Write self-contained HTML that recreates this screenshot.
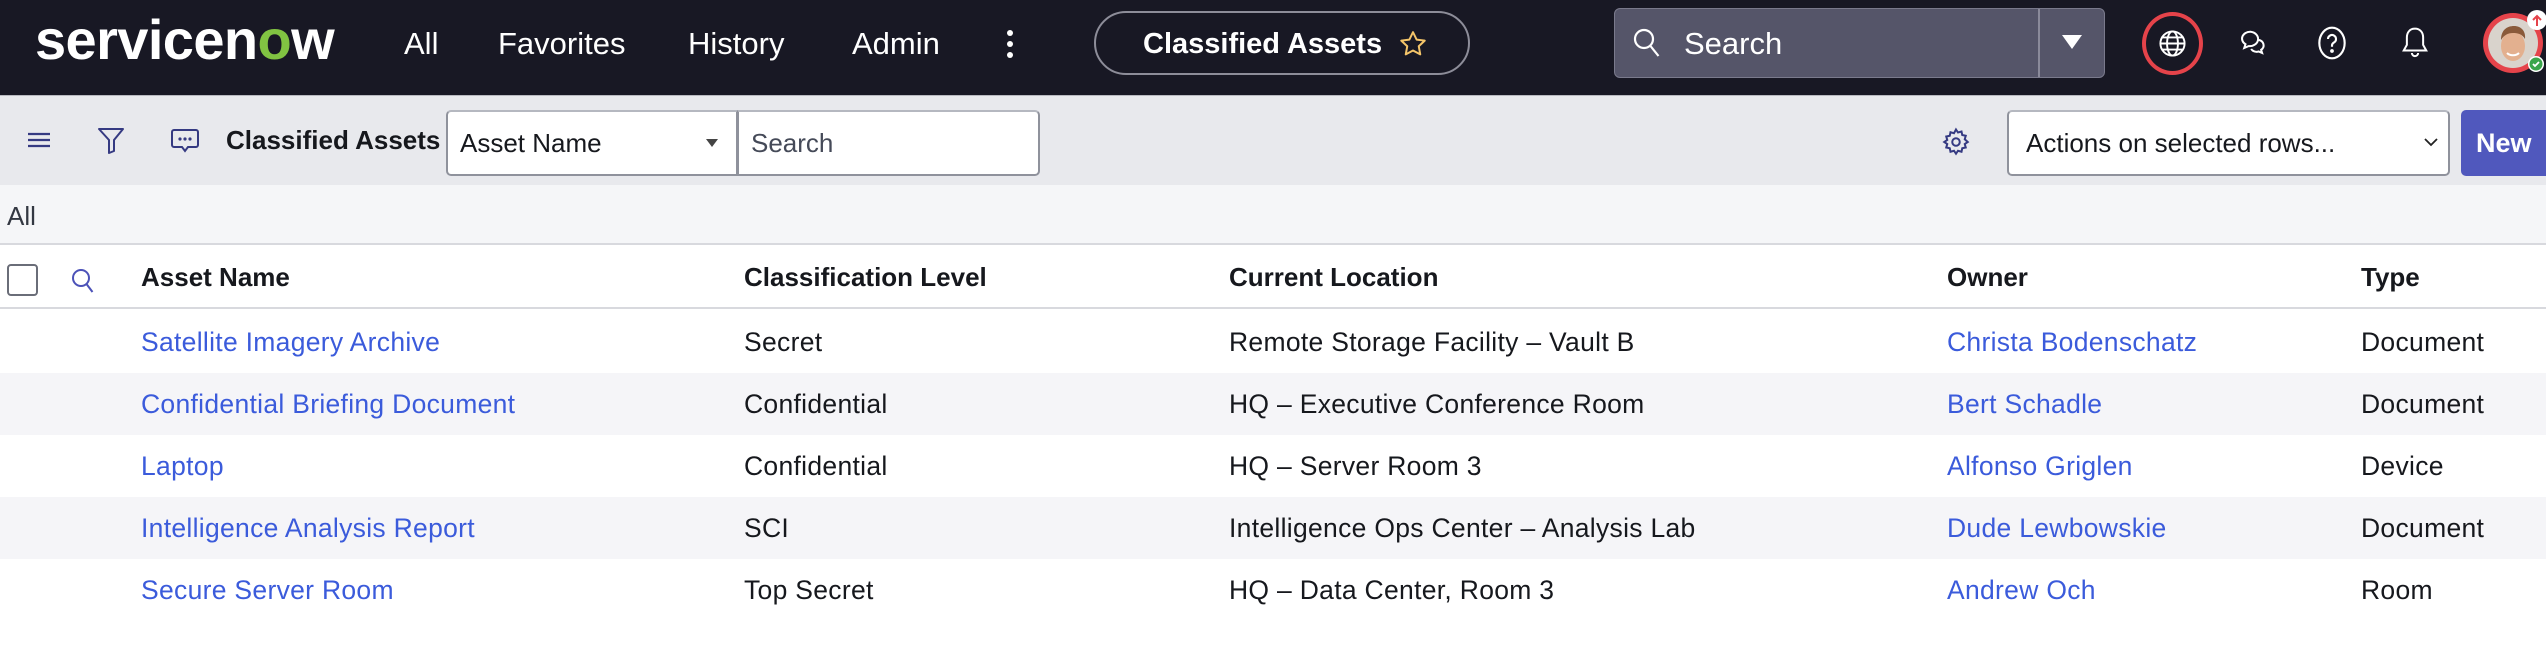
<!DOCTYPE html>
<html><head><meta charset="utf-8">
<style>
*{box-sizing:border-box;margin:0;padding:0}
body{width:2546px;height:664px;overflow:hidden;background:#fff;font-family:"Liberation Sans",sans-serif;position:relative;color:#16181d}
.abs{position:absolute}
#nav{left:0;top:0;width:2546px;height:95px;background:#181824}
.nl{position:absolute;top:24px;color:#fff;font-size:31px;line-height:40px}
#tb{left:0;top:95px;width:2546px;height:90px;background:#e8e9ed;border-top:1px solid #b8b9c0}
#allrow{left:0;top:185px;width:2546px;height:60px;background:#f5f6f8;border-bottom:2px solid #d8d9de}
.row{position:absolute;left:0;width:2546px;height:62px}
.c{position:absolute;font-size:26.5px;letter-spacing:0.3px;line-height:30px;white-space:nowrap}
.lnk{color:#3b5bdb}
.h{font-weight:bold;font-size:26px;letter-spacing:0}
</style></head><body>
<div id="nav" class="abs">
  <div class="abs" style="left:35px;top:10px;color:#fff;font-size:56px;font-weight:bold;letter-spacing:-0.6px;line-height:60px;white-space:nowrap">servicen<span style="color:#81c342">o</span>w</div>
  <div class="nl" style="left:404px">All</div>
  <div class="nl" style="left:498px">Favorites</div>
  <div class="nl" style="left:688px">History</div>
  <div class="nl" style="left:852px">Admin</div>
  <svg class="abs" style="left:1003px;top:28px" width="14" height="34"><circle cx="7" cy="5" r="3" fill="#fff"/><circle cx="7" cy="16" r="3" fill="#fff"/><circle cx="7" cy="27" r="3" fill="#fff"/></svg>
  <div class="abs" style="left:1094px;top:11px;width:376px;height:64px;border:2px solid #8d8d99;border-radius:32px"></div>
  <div class="abs" style="left:1143px;top:24px;color:#fff;font-size:29px;font-weight:bold;line-height:40px">Classified Assets</div>
  <svg class="abs" style="left:1398px;top:29px" width="30" height="30" viewBox="0 0 24 24"><path d="M12 2.5l2.9 6 6.5.8-4.8 4.5 1.2 6.5L12 17.2l-5.8 3.1 1.2-6.5L2.6 9.3l6.5-.8z" fill="none" stroke="#f4c56a" stroke-width="1.6" stroke-linejoin="round"/></svg>
  <div class="abs" style="left:1614px;top:8px;width:491px;height:70px;background:#555569;border:1px solid #7a7a8c;border-radius:6px"></div>
  <div class="abs" style="left:2038px;top:9px;width:2px;height:68px;background:#8a8a9a"></div>
  <svg class="abs" style="left:1632px;top:27px" width="30" height="32" viewBox="0 0 30 32"><circle cx="12" cy="12" r="9" fill="none" stroke="#fff" stroke-width="2.2"/><path d="M18.5 19l8 10" stroke="#fff" stroke-width="2.2"/></svg>
  <div class="abs" style="left:1684px;top:24px;color:#fff;font-size:31px;line-height:40px">Search</div>
  <svg class="abs" style="left:2060px;top:33px" width="24" height="18"><path d="M2 2h20L12 16z" fill="#fff"/></svg>
  <div class="abs" style="left:2142px;top:12px;width:61px;height:63px;border:4px solid #e5434a;border-radius:50%"></div>
  <svg class="abs" style="left:2158px;top:29px" width="29" height="29" viewBox="0 0 24 24" fill="none" stroke="#fff" stroke-width="1.6"><circle cx="12" cy="12" r="10"/><ellipse cx="12" cy="12" rx="4.5" ry="10"/><path d="M2 12h20M3.5 7h17M3.5 17h17"/></svg>
  <svg class="abs" style="left:2237px;top:28px" width="32" height="30" viewBox="0 0 24 24" fill="none" stroke="#fff" stroke-width="1.6"><path d="M10 3a6.5 5.5 0 0 0-4 10l-1 3 3.5-1.5A6.5 5.5 0 1 0 10 3z"/><path d="M16.5 9.5a5 4.5 0 0 1 2 8l.8 2.5-2.8-1.2a5 4.5 0 0 1-6-2"/></svg>
  <svg class="abs" style="left:2316px;top:25px" width="32" height="36" viewBox="0 0 24 27" fill="none" stroke="#fff" stroke-width="1.6"><ellipse cx="12" cy="13.5" rx="9.5" ry="11.5"/><path d="M9 10.5a3 3 0 1 1 4.5 2.6c-1 .6-1.5 1.2-1.5 2.4v.8"/><circle cx="12" cy="19.5" r=".6" fill="#fff"/></svg>
  <svg class="abs" style="left:2400px;top:26px" width="30" height="34" viewBox="0 0 24 27" fill="none" stroke="#fff" stroke-width="1.6"><path d="M12 2c-4 0-6.5 3-6.5 7v6L3 19.5h18L18.5 15V9c0-4-2.5-7-6.5-7z"/><path d="M9.5 21.5a2.5 2.5 0 0 0 5 0"/></svg>
  <svg class="abs" style="left:2480px;top:10px" width="66" height="66" viewBox="0 0 66 66">
    <circle cx="33" cy="33" r="30" fill="#e5434a"/>
    <circle cx="33" cy="33" r="25" fill="#d9d3cc"/>
    <ellipse cx="33" cy="36" rx="12" ry="15" fill="#e3b08f"/>
    <path d="M21 30c0-10 6-14 13-14s12 5 11 13c-3-5-7-6-12-6s-9 2-12 7z" fill="#8a5a3a"/>
    <path d="M27 43c3 3 9 3 12 0" stroke="#fff" stroke-width="2" fill="none"/>
    <circle cx="57" cy="10" r="10" fill="#fff"/><path d="M57 16V6M53 10l4-4 4 4" stroke="#e5434a" stroke-width="2" fill="none"/>
    <circle cx="56" cy="54" r="8" fill="#fff"/><circle cx="56" cy="54" r="6.5" fill="#3aa54a"/><path d="M53 54l2 2 4-4" stroke="#fff" stroke-width="1.8" fill="none"/>
  </svg>
</div>

<div id="tb" class="abs">
  <svg class="abs" style="left:28px;top:36px" width="22" height="16"><path d="M0 2h22M0 8h22M0 14h22" stroke="#353a82" stroke-width="2.2"/></svg>
  <svg class="abs" style="left:97px;top:31px" width="28" height="28" viewBox="0 0 28 28"><path d="M2 2h24L17 13v11l-5 2V13z" fill="none" stroke="#353a82" stroke-width="2" stroke-linejoin="round"/></svg>
  <svg class="abs" style="left:171px;top:32px" width="28" height="26" viewBox="0 0 28 26"><path d="M3 2h22a2 2 0 0 1 2 2v13a2 2 0 0 1-2 2h-8l-3 4-3-4H3a2 2 0 0 1-2-2V4a2 2 0 0 1 2-2z" fill="none" stroke="#353a82" stroke-width="2"/><circle cx="9" cy="11" r="1.6" fill="#353a82"/><circle cx="14" cy="11" r="1.6" fill="#353a82"/><circle cx="19" cy="11" r="1.6" fill="#353a82"/></svg>
  <div class="abs" style="left:226px;top:27px;font-size:26px;font-weight:bold;line-height:34px">Classified Assets</div>
  <div class="abs" style="left:446px;top:14px;width:292px;height:66px;background:#fff;border:2px solid #8f929c;border-radius:5px 0 0 5px;border-top-color:#b5b8c0"></div>
  <div class="abs" style="left:460px;top:30px;font-size:26px;line-height:34px">Asset Name</div>
  <svg class="abs" style="left:706px;top:43px" width="12" height="8"><path d="M0 0h12L6 8z" fill="#444"/></svg>
  <div class="abs" style="left:737px;top:14px;width:303px;height:66px;background:#fff;border:2px solid #8f929c;border-radius:0 5px 5px 0;border-top-color:#b5b8c0"></div>
  <div class="abs" style="left:751px;top:30px;font-size:26px;line-height:34px;color:#454a58">Search</div>
  <svg class="abs" style="left:1941px;top:31px" width="30" height="30" viewBox="0 0 24 24" fill="none" stroke="#353a82" stroke-width="1.6"><circle cx="12" cy="12" r="3"/><path d="M12 2l1.6 2.4 2.8-.8.6 2.8 2.8.6-.8 2.8L21.4 12 19 13.6l.8 2.8-2.8.6-.6 2.8-2.8-.8L12 21.4l-1.6-2.4-2.8.8-.6-2.8-2.8-.6.8-2.8L2.6 12 5 10.4l-.8-2.8L7 7l.6-2.8 2.8.8z"/></svg>
  <div class="abs" style="left:2007px;top:14px;width:443px;height:66px;background:#fff;border:2px solid #8f929c;border-radius:5px;border-top-color:#b5b8c0"></div>
  <div class="abs" style="left:2026px;top:30px;font-size:26px;line-height:34px">Actions on selected rows...</div>
  <svg class="abs" style="left:2424px;top:42px" width="14" height="9"><path d="M1 1l6 6 6-6" stroke="#222" stroke-width="1.8" fill="none"/></svg>
  <div class="abs" style="left:2461px;top:14px;width:90px;height:66px;background:#5058bd;border-radius:5px 0 0 5px"></div>
  <div class="abs" style="left:2476px;top:30px;font-size:27px;font-weight:bold;color:#fff;line-height:34px">New</div>
</div>

<div id="allrow" class="abs"><div class="abs" style="left:7px;top:15px;font-size:26px;line-height:32px;color:#333842">All</div></div>

<div class="row" style="top:245px;height:64px;border-bottom:2px solid #d8d9de">
  <div class="abs" style="left:7px;top:19px;width:31px;height:32px;border:2px solid #6a6d78;border-radius:4px;background:#fff"></div>
  <svg class="abs" style="left:70px;top:22px" width="26" height="28" viewBox="0 0 26 28"><circle cx="11" cy="11" r="8" fill="none" stroke="#4c52b8" stroke-width="2"/><path d="M16.5 17l6 8" stroke="#4c52b8" stroke-width="2"/></svg>
  <div class="c h" style="left:141px;top:17px">Asset Name</div>
  <div class="c h" style="left:744px;top:17px">Classification Level</div>
  <div class="c h" style="left:1229px;top:17px">Current Location</div>
  <div class="c h" style="left:1947px;top:17px">Owner</div>
  <div class="c h" style="left:2361px;top:17px">Type</div>
</div>

<div class="row" style="top:311px">
  <div class="c lnk" style="left:141px;top:16px">Satellite Imagery Archive</div><div class="c" style="left:744px;top:16px">Secret</div><div class="c" style="left:1229px;top:16px">Remote Storage Facility – Vault B</div><div class="c lnk" style="left:1947px;top:16px">Christa Bodenschatz</div><div class="c" style="left:2361px;top:16px">Document</div>
</div>
<div class="row" style="top:373px;background:#f5f5f8">
  <div class="c lnk" style="left:141px;top:16px">Confidential Briefing Document</div><div class="c" style="left:744px;top:16px">Confidential</div><div class="c" style="left:1229px;top:16px">HQ – Executive Conference Room</div><div class="c lnk" style="left:1947px;top:16px">Bert Schadle</div><div class="c" style="left:2361px;top:16px">Document</div>
</div>
<div class="row" style="top:435px">
  <div class="c lnk" style="left:141px;top:16px">Laptop</div><div class="c" style="left:744px;top:16px">Confidential</div><div class="c" style="left:1229px;top:16px">HQ – Server Room 3</div><div class="c lnk" style="left:1947px;top:16px">Alfonso Griglen</div><div class="c" style="left:2361px;top:16px">Device</div>
</div>
<div class="row" style="top:497px;background:#f5f5f8">
  <div class="c lnk" style="left:141px;top:16px">Intelligence Analysis Report</div><div class="c" style="left:744px;top:16px">SCI</div><div class="c" style="left:1229px;top:16px">Intelligence Ops Center – Analysis Lab</div><div class="c lnk" style="left:1947px;top:16px">Dude Lewbowskie</div><div class="c" style="left:2361px;top:16px">Document</div>
</div>
<div class="row" style="top:559px">
  <div class="c lnk" style="left:141px;top:16px">Secure Server Room</div><div class="c" style="left:744px;top:16px">Top Secret</div><div class="c" style="left:1229px;top:16px">HQ – Data Center, Room 3</div><div class="c lnk" style="left:1947px;top:16px">Andrew Och</div><div class="c" style="left:2361px;top:16px">Room</div>
</div>
</body></html>
